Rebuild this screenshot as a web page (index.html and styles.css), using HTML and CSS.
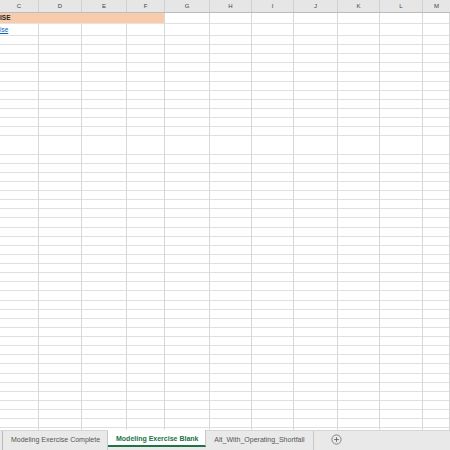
FILE: index.html
```html
<!DOCTYPE html>
<html>
<head>
<meta charset="utf-8">
<link rel="stylesheet" href="styles.css">
</head>
<body>
<div class="sheet">
  <div class="hdr">
    <div class="hc c1">C</div><div class="hc c2">D</div><div class="hc c3">E</div><div class="hc c4">F</div><div class="hc c5">G</div><div class="hc c6">H</div><div class="hc c7">I</div><div class="hc c8">J</div><div class="hc c9">K</div><div class="hc c10">L</div><div class="hc c11">M</div>
  </div>
  <div class="row r1">
    <div class="cell title">ISE</div>
    <div class="cell c5"></div><div class="cell c6"></div><div class="cell c7"></div><div class="cell c8"></div><div class="cell c9"></div><div class="cell c10"></div><div class="cell c11"></div>
  </div>
  <div class="row r2">
    <div class="cell c1"><a class="link">ise</a></div><div class="cell c2"></div><div class="cell c3"></div><div class="cell c4"></div><div class="cell c5"></div><div class="cell c6"></div><div class="cell c7"></div><div class="cell c8"></div><div class="cell c9"></div><div class="cell c10"></div><div class="cell c11"></div>
  </div>
  <div class="body">
    <div class="col c1"></div><div class="col c2"></div><div class="col c3"></div><div class="col c4"></div><div class="col c5"></div><div class="col c6"></div><div class="col c7"></div><div class="col c8"></div><div class="col c9"></div><div class="col c10"></div><div class="col c11"></div>
  </div>
</div>
<div class="tabs">
  <div class="edge"></div>
  <div class="tab">Modeling Exercise Complete</div>
  <div class="tab active">Modeling Exercise Blank</div>
  <div class="tab last">Alt_With_Operating_Shortfall</div>
  <div class="add"><svg width="11" height="11" viewBox="0 0 11 11"><circle cx="5.5" cy="5.5" r="4.6" fill="none" stroke="#7a7a7a" stroke-width="0.9"/><path d="M5.5 3.2v4.6M3.2 5.5h4.6" stroke="#666" stroke-width="0.9"/></svg></div>
</div>
</body>
</html>
```
FILE: styles.css
```css
* { box-sizing: border-box; }
html, body { margin: 0; padding: 0; }
body {
  width: 450px;
  height: 450px;
  overflow: hidden;
  background: #fff;
  font-family: "Liberation Sans", Arial, sans-serif;
  display: flex;
  flex-direction: column;
}
.sheet { height: 430px; display: flex; flex-direction: column; overflow: hidden; }
.hdr {
  display: flex;
  height: 13px;
  background: #e6e6e6;
  border-bottom: 1px solid #bcbcbc;
  flex: none;
}
.hc {
  font-size: 6px;
  color: #444;
  text-align: center;
  line-height: 12px;
  border-right: 1px solid #d0d0d0;
}
.c1 { width: 39px; }
.c2 { width: 43px; }
.c3 { width: 45px; }
.c4 { width: 38px; }
.c5 { width: 45px; }
.c6 { width: 42px; }
.c7 { width: 42px; }
.c8 { width: 44px; }
.c9 { width: 42px; }
.c10 { width: 43px; }
.c11 { flex: 1; border-right: none; }
.row { display: flex; flex: none; }
.r1 { height: 11px; }
.r2 { height: 12px; }
.cell {
  border-right: 1px solid #d8d8d8;
  border-bottom: 1px solid #e0e0e0;
  font-size: 6.5px;
  line-height: 10px;
}
.title {
  width: 165px;
  background: #f8cbad;
  font-weight: bold;
  color: #222;
  padding-left: 0;
  border-bottom-color: #e8e0da;
}
.link { color: #0563c1; text-decoration: underline; font-size: 6.5px; line-height: 11px; }
.body {
  flex: 1;
  display: flex;
  background-image: repeating-linear-gradient(to bottom, transparent 0, transparent 8.125px, #e0e0e0 8.125px, #e0e0e0 9.125px);
  background-position: 0 0;
}
.col { border-right: 1px solid #d8d8d8; }
.tabs {
  height: 20px;
  flex: none;
  background: #e9e9e9;
  border-top: 1px solid #d6d6d6;
  display: flex;
  align-items: stretch;
}
.edge { width: 3px; border-right: 1px solid #b8b8b8; }
.tab {
  font-size: 7px;
  color: #555;
  padding: 0 8px;
  line-height: 17px;
  border-right: 1px solid #c8c8c8;
  width: 105px;
  text-align: center;
  white-space: nowrap;
}
.tab.active {
  background: #fff;
  color: #217346;
  font-weight: bold;
  width: 98px;
  border-bottom: 2px solid #217346;
  margin-bottom: 3px;
  margin-top: -1px;
}
.tab.last { width: 108px; }
.add { width: 44px; display: flex; align-items: center; justify-content: center; padding-bottom: 2px; }
```
